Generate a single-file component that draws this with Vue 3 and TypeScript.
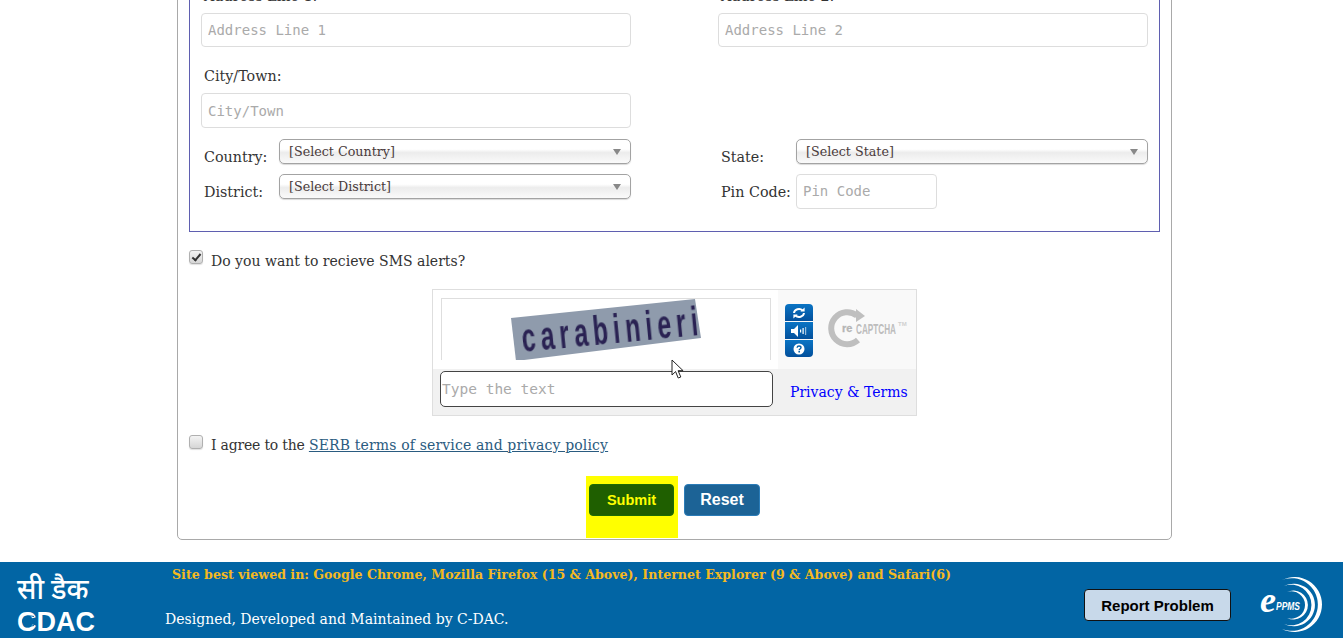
<script setup lang="ts">
import { ref } from 'vue';

const smsAlerts = ref(true);
const agreed = ref(false);
</script>

<template>
  <div class="page">
    <main class="main">
      <form class="card" @submit.prevent>
        <div class="fieldset">
          <div class="grid">
            <div class="stack">
              <label class="label">Address Line 1:</label>
              <input class="input" placeholder="Address Line 1" />
            </div>
            <div class="stack">
              <label class="label">Address Line 2:</label>
              <input class="input" placeholder="Address Line 2" />
            </div>
          </div>
          <div class="grid city-row">
            <div class="stack">
              <label class="label">City/Town:</label>
              <input class="input city" placeholder="City/Town" />
            </div>
          </div>
          <div class="grid select-row">
            <div class="inline">
              <label class="label side">Country:</label>
              <div class="dropdown"><select><option>[Select Country]</option></select></div>
            </div>
            <div class="inline">
              <label class="label side">State:</label>
              <div class="dropdown"><select><option>[Select State]</option></select></div>
            </div>
          </div>
          <div class="grid select-row">
            <div class="inline">
              <label class="label side">District:</label>
              <div class="dropdown"><select><option>[Select District]</option></select></div>
            </div>
            <div class="inline">
              <label class="label side">Pin Code:</label>
              <input class="input pin" placeholder="Pin Code" />
            </div>
          </div>
        </div>

        <label class="check-row sms">
          <input v-model="smsAlerts" type="checkbox" />
          <span>Do you want to recieve SMS alerts?</span>
        </label>

        <div class="captcha">
          <div class="captcha-image-cell">
            <div class="captcha-image">
              <svg width="328" height="61" viewBox="0 0 328 61">
                <defs>
                  <filter id="soft"><feGaussianBlur stdDeviation="0.6" /></filter>
                </defs>
                <polygon points="69,19 253,0 259,39 74,62" fill="#8f9bac" />
                <text
                  class="captcha-word"
                  transform="translate(81 53) rotate(-5.5) scale(.65 1.05)"
                  textLength="272"
                  filter="url(#soft)"
                >carabinieri</text>
              </svg>
            </div>
          </div>
          <div class="captcha-tools">
            <div class="tool-buttons">
              <button type="button" class="tool" aria-label="Get a new challenge">
                <svg width="14" height="12" viewBox="0 0 14 12" fill="none" stroke="#fff" stroke-width="2">
                  <path d="M2 6a5 4.4 0 0 1 8.6-2.6" />
                  <path d="M12 6a5 4.4 0 0 1-8.6 2.6" />
                  <path d="M8.4 4.6h4.2V.6z" fill="#fff" stroke="none" />
                  <path d="M5.6 7.4H1.4v4z" fill="#fff" stroke="none" />
                </svg>
              </button>
              <button type="button" class="tool" aria-label="Get an audio challenge">
                <svg width="16" height="12" viewBox="0 0 16 12" fill="#fff">
                  <path d="M0 4h3l4-4v12L3 8H0z" />
                  <rect x="9" y="4.500" width="1.200" height="3" />
                  <rect x="11.500" y="3" width="1.200" height="6" />
                  <rect x="14" y="2" width="1.200" height="8" opacity=".6" />
                </svg>
              </button>
              <button type="button" class="tool" aria-label="Help">
                <svg width="12" height="12" viewBox="0 0 12 12">
                  <circle cx="6" cy="6" r="5.500" fill="#fff" />
                  <path d="M4.100 4.700C4.200 3.500 5 3 6 3c1.200 0 2 .7 2 1.600C8 6 6.200 6 6.200 7.200" fill="none" stroke="#0560a8" stroke-width="1.400" />
                  <rect x="5.400" y="8" width="1.600" height="1.500" fill="#0560a8" />
                </svg>
              </button>
            </div>
            <svg class="recaptcha-logo" width="80" height="42" viewBox="0 0 80 42">
              <path d="M29 7.500A16 16 0 1 0 30 32" fill="none" stroke="#bfbfbf" stroke-width="6" />
              <path d="M28 1l9 7-9 6z" fill="#bfbfbf" />
              <text x="14" y="24" class="re-word">re</text>
              <text x="28" y="26" class="cap-word" textLength="40" lengthAdjust="spacingAndGlyphs">CAPTCHA</text>
              <text x="70" y="18" class="tm-word">TM</text>
            </svg>
          </div>
          <div class="captcha-input-cell">
            <input class="captcha-input" placeholder="Type the text" />
          </div>
          <div class="captcha-link-cell">
            <a href="#" class="privacy">Privacy &amp; Terms</a>
          </div>
        </div>

        <label class="check-row agree">
          <input v-model="agreed" type="checkbox" />
          <span class="agree-text">I agree to the <a href="#" class="terms">SERB terms of service and privacy policy</a></span>
        </label>

        <div class="actions">
          <div class="submit-wrap">
            <button type="submit" class="btn submit">Submit</button>
          </div>
          <button type="reset" class="btn reset">Reset</button>
        </div>
      </form>
    </main>

    <footer class="footer">
      <div class="cdac-logo">
        <div class="hindi">सी डैक</div>
        <svg width="78" height="27" viewBox="0 0 78 27">
          <text x="0" y="26" class="cdac-word" textLength="78" lengthAdjust="spacingAndGlyphs">CDAC</text>
          <path d="M17 11.500C9 9.500 5.500 13 5.500 16S9 22.500 17 20.500" fill="none" stroke="#0265a4" stroke-width="1" />
        </svg>
      </div>
      <div class="footer-text">
        <div class="browsers">Site best viewed in: Google Chrome, Mozilla Firefox (15 &amp; Above), Internet Explorer (9 &amp; Above) and Safari(6)</div>
        <div class="credits">Designed, Developed and Maintained by C-DAC.</div>
      </div>
      <button type="button" class="report">Report Problem</button>
      <svg class="eppms-logo" width="68" height="58" viewBox="0 0 68 58" fill="#fff">
        <path d="M24 3A27.500 27.500 0 1 1 24 52A26.300 26.300 0 1 0 24 3z" />
        <path d="M26 9A21.300 21.300 0 1 1 26 47A20.300 20.300 0 1 0 26 9z" />
        <path d="M29 15A14.500 14.500 0 1 1 29 41A13.700 13.700 0 1 0 29 15z" />
        <text x="2" y="35" class="e-word">e</text>
        <text x="18" y="33" class="ppms-word" textLength="24" lengthAdjust="spacingAndGlyphs">PPMS</text>
      </svg>
    </footer>

    <svg class="pointer" width="14" height="21" viewBox="0 0 14 21">
      <path d="M1 1v15l3.600-3.400 2.600 6.400 2.600-1-2.700-6.300h5z" fill="#fff" stroke="#222" stroke-width="1" />
    </svg>
  </div>
</template>

<style scoped>
.page {
  position: relative;
  height: 638px;
  display: flex;
  flex-direction: column;
  overflow: hidden;
  font-family: 'DejaVu Serif', serif;
  font-size: 14px;
  color: #333;
}
.main {
  height: 562px;
  display: flex;
  flex-direction: column;
  justify-content: flex-end;
  padding: 0 171px 22px 177px;
  box-sizing: border-box;
  overflow: hidden;
  flex-shrink: 0;
}
.card {
  flex-shrink: 0;
  border: 1px solid #a9a9a9;
  border-radius: 5px;
  padding: 8px 11px 1px;
}
.fieldset {
  border: 1px solid #5f5fb0;
  padding: 8px 11px 22px;
}
.grid {
  display: grid;
  grid-template-columns: 430px 430px;
  column-gap: 87px;
}
.stack {
  display: flex;
  flex-direction: column;
}
.label {
  display: block;
  padding-left: 3px;
  line-height: 20px;
  font-size: 14.300px;
  color: #333;
}
.stack .label {
  margin-bottom: 7px;
}
.city-row {
  margin-top: 19px;
}
.select-row {
  margin-top: 11px;
}
.select-row + .select-row {
  margin-top: 7px;
}
.inline {
  display: flex;
  align-items: flex-start;
}
.side {
  width: 78px;
  flex-shrink: 0;
  box-sizing: border-box;
  padding-top: 8px;
}
.input {
  width: 100%;
  height: 34px;
  box-sizing: border-box;
  border: 1px solid #ddd;
  border-radius: 4px;
  padding: 0 6px;
  font-family: 'DejaVu Sans Mono', monospace;
  font-size: 14px;
  background: #fff;
}
.input::placeholder,
.captcha-input::placeholder {
  color: #aaa;
}
.city {
  height: 35px;
}
.pin {
  width: 141px;
  height: 35px;
  padding-bottom: 2px;
}
.dropdown {
  position: relative;
  flex: 1;
  height: 25px;
}
.dropdown select {
  appearance: none;
  width: 100%;
  height: 25px;
  box-sizing: border-box;
  border: 1px solid #a3a3a3;
  border-radius: 5px;
  padding: 0 20px 0 9px;
  font-family: 'DejaVu Serif', serif;
  font-size: 12.700px;
  color: #4a3b3b;
  background: linear-gradient(#fff 0, #fff 40%, #ececec 55%, #fafafa 100%);
  box-shadow: 0 1px 1px rgba(0, 0, 0, 0.15);
}
.dropdown::after {
  content: '';
  position: absolute;
  right: 10px;
  top: 10px;
  border-left: 4px solid transparent;
  border-right: 4px solid transparent;
  border-top: 6px solid #888;
  pointer-events: none;
}
.check-row {
  display: flex;
  align-items: center;
  height: 20px;
  color: #333;
}
.check-row input {
  appearance: none;
  position: relative;
  width: 14px;
  height: 14px;
  margin: -6px 8px 0 0;
  border: 1px solid #b0b0b0;
  border-radius: 3px;
  background: linear-gradient(#f4f4f4, #d6d6d6);
  box-shadow: 0 1px 1px rgba(0, 0, 0, 0.12);
  flex-shrink: 0;
}
.check-row input:checked::after {
  content: '';
  position: absolute;
  left: 3.500px;
  top: 0.500px;
  width: 3px;
  height: 7px;
  border: solid #333;
  border-width: 0 2.500px 2.500px 0;
  transform: rotate(40deg);
}
.sms {
  margin-top: 19px;
}
.sms input {
  margin-top: -8px;
}
.agree {
  margin-top: 19px;
}
.agree-text {
  letter-spacing: -0.2px;
}
.terms {
  letter-spacing: 0.15px;
  color: #2a5b80;
}
.captcha {
  width: 485px;
  margin: 18px auto 0;
  box-sizing: border-box;
  border: 1px solid #dedede;
  display: grid;
  grid-template-columns: 345px 138px;
  grid-template-rows: 79px 46px;
  background: #f9f9f9;
}
.captcha-image-cell {
  background: #fff;
  padding: 8px 0 0 8px;
}
.captcha-image {
  width: 330px;
  height: 62px;
  box-sizing: border-box;
  border: 1px solid #dedede;
  border-bottom: 0;
  overflow: hidden;
}
.captcha-word {
  font-family: 'Liberation Sans', sans-serif;
  font-weight: 700;
  font-size: 38px;
  fill: #2a2452;
}
.captcha-tools {
  display: flex;
  align-items: flex-start;
  padding: 14px 0 0 7px;
}
.tool-buttons {
  display: flex;
  flex-direction: column;
  gap: 1px;
  width: 28px;
  border-radius: 4px;
  overflow: hidden;
}
.tool {
  height: 17px;
  padding: 0;
  border: 0;
  display: flex;
  align-items: center;
  justify-content: center;
  background: linear-gradient(#0a74c4, #03509c);
}
.recaptcha-logo {
  margin: 4px 0 0 15px;
}
.re-word {
  font: 700 11px 'Liberation Sans', sans-serif;
  fill: #b5b5b5;
  stroke: #b5b5b5;
  stroke-width: 0.3px;
}
.cap-word {
  font: 700 15px 'Liberation Sans', sans-serif;
  fill: #bdbdbd;
}
.tm-word {
  font: 700 6px 'Liberation Sans', sans-serif;
  fill: #d0d0d0;
}
.captcha-input-cell,
.captcha-link-cell {
  background: #f1f1f1;
}
.captcha-input-cell {
  padding: 2px 0 0 7px;
}
.captcha-input {
  display: block;
  width: 333px;
  height: 36px;
  box-sizing: border-box;
  border: 1px solid #444;
  border-radius: 5px;
  padding: 0 1px;
  background: #fff;
  font-family: 'DejaVu Sans Mono', monospace;
  font-size: 14.500px;
}
.captcha-link-cell {
  padding: 13px 0 0 12px;
}
.privacy {
  color: #0000ff;
  text-decoration: none;
  line-height: 20px;
  white-space: nowrap;
}
.actions {
  margin-top: 21px;
  display: flex;
  justify-content: center;
  align-items: flex-start;
  gap: 6px;
  padding-right: 3px;
}
.submit-wrap {
  background: #ffff00;
  padding: 8px 4px 22px 3px;
}
.btn {
  display: block;
  height: 32px;
  box-sizing: border-box;
  border-radius: 4px;
  font-family: 'Liberation Sans', sans-serif;
  font-weight: 700;
  font-size: 14.500px;
}
.submit {
  width: 85px;
  padding-left: 6px;
  border: 1px solid #1c6c05;
  background: #1f5f00;
  color: #ffff00;
}
.reset {
  width: 76px;
  margin-top: 8px;
  border: 1px solid #2b7cb8;
  background: #1c6396;
  color: #fff;
  font-size: 16px;
}
.footer {
  position: relative;
  height: 76px;
  flex-shrink: 0;
  background: #0265a4;
  display: flex;
  align-items: flex-start;
}
.cdac-logo {
  width: 78px;
  margin: 10px 0 0 17px;
  flex-shrink: 0;
  color: #fff;
}
.hindi {
  height: 33px;
  font-family: 'Noto Sans', 'DejaVu Sans', sans-serif;
  font-size: 28px;
  font-weight: 500;
  line-height: 33px;
  white-space: nowrap;
}
.cdac-logo svg {
  display: block;
}
.cdac-word {
  font: 700 28px 'Liberation Sans', sans-serif;
  fill: #fff;
}
.footer-text {
  flex: 1;
  padding-left: 70px;
}
.browsers {
  margin: 4px 0 0 7px;
  line-height: 18px;
  font-size: 12.600px;
  font-weight: 700;
  color: #f5b920;
  white-space: nowrap;
}
.credits {
  margin-top: 25px;
  line-height: 20px;
  color: #fff;
  white-space: nowrap;
}
.report {
  width: 147px;
  height: 32px;
  margin: 27px 27px 0 0;
  flex-shrink: 0;
  border: 1px solid #111;
  border-radius: 4px;
  background: #c8d9ea;
  color: #000;
  font-family: 'Liberation Sans', sans-serif;
  font-weight: 700;
  font-size: 15px;
}
.eppms-logo {
  margin: 15px 17px 0 0;
  flex-shrink: 0;
}
.e-word {
  font: italic 700 36px 'Liberation Serif', serif;
  fill: #fff;
}
.ppms-word {
  font: italic 700 10px 'Liberation Sans', sans-serif;
  fill: #fff;
  stroke: #0265a4;
  stroke-width: 2px;
  paint-order: stroke;
}
.pointer {
  position: absolute;
  left: 671px;
  top: 359px;
}
</style>

<style>
html,
body {
  margin: 0;
  overflow: hidden;
}
</style>
